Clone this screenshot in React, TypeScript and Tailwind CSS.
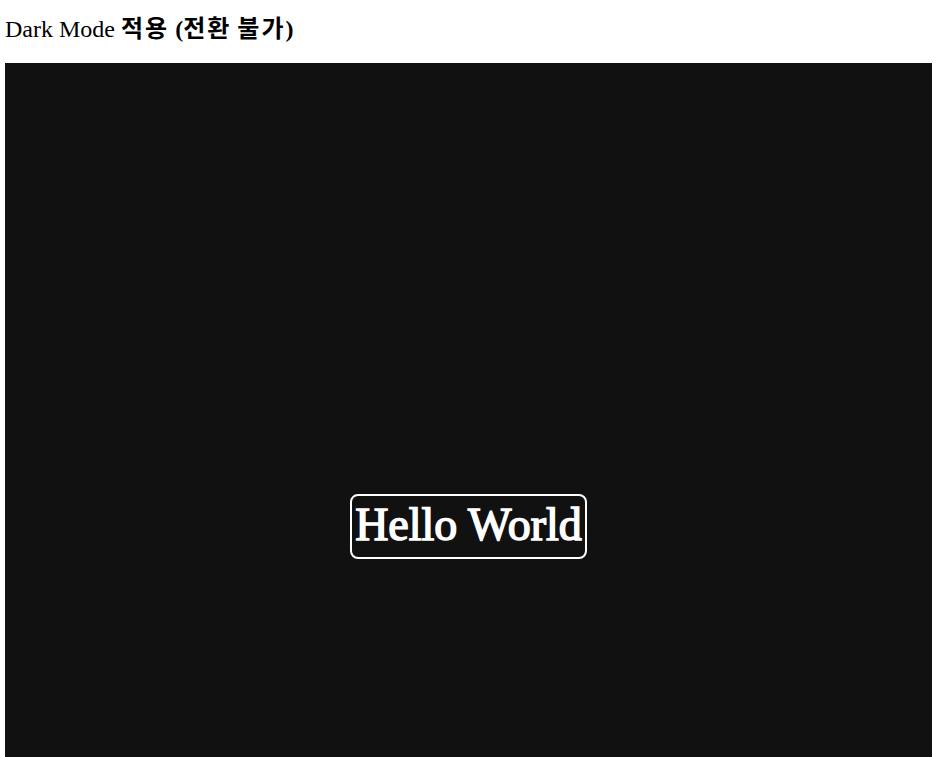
export default function App() {
  return (
    <div className="bg-white min-h-screen">
      <h1 className="pl-[5px] pt-[16px] h-[63px] text-[24px] leading-[27px] font-normal text-black font-['Liberation_Serif','Noto_Sans_CJK_KR',serif]">
        Dark Mode{' '}
        <span className="font-bold leading-[20px] tracking-[2px] font-['Noto_Sans_CJK_KR',sans-serif]">적용</span>{' '}
        <span className="font-bold">(</span>
        <span className="font-bold leading-[20px] tracking-[2px] font-['Noto_Sans_CJK_KR',sans-serif]">전환</span>{' '}
        <span className="font-bold leading-[20px] tracking-[2px] font-['Noto_Sans_CJK_KR',sans-serif]">불가</span>
        <span className="font-bold">)</span>
      </h1>
      <main className="ml-[5px] w-[927px] h-[694px] bg-[#111111] flex justify-center items-start pt-[431px]">
        <div className="border-2 border-white rounded-[8px] px-[3px] pt-[3px] pb-[6px] text-white text-[46px] leading-[52px] font-normal [-webkit-text-stroke:1.5px_white] font-['Liberation_Serif',serif]">
          Hello World
        </div>
      </main>
    </div>
  );
}
